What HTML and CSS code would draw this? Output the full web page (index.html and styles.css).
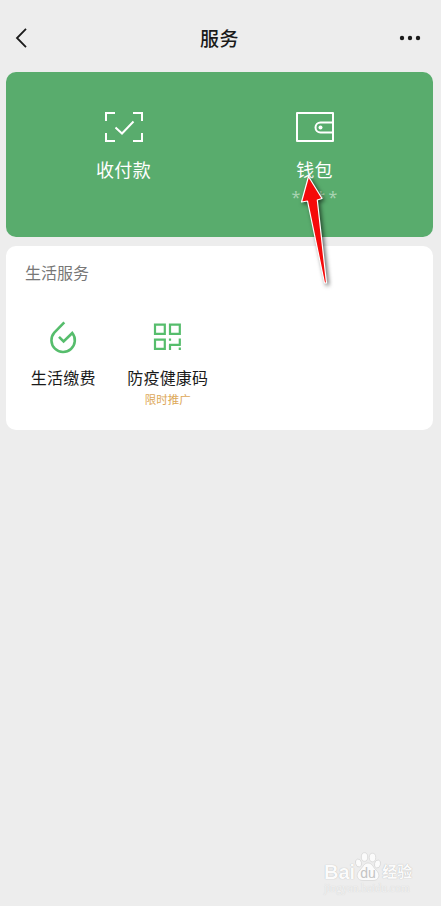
FILE: index.html
```html
<!DOCTYPE html>
<html lang="zh-CN">
<head>
    <meta charset="UTF-8">
    <meta name="viewport" content="width=device-width, initial-scale=1.0">
    <title>服务</title>
    <link rel="stylesheet" href="styles.css">
</head>
<body>
    <header class="navbar">
        <svg class="back" width="14" height="22" viewBox="0 0 14 22">
            <path d="M12 1.800 3 11l9 9.200" fill="none" stroke="#1a1a1a" stroke-width="1.800"/>
        </svg>
        <h1>服务</h1>
        <svg class="more" width="22" height="6" viewBox="0 0 22 6">
            <circle cx="3" cy="3" r="2.200"/>
            <circle cx="11" cy="3" r="2.200"/>
            <circle cx="19" cy="3" r="2.200"/>
        </svg>
    </header>

    <main>
        <section class="pay-card">
            <div class="pay-item">
                <svg width="40" height="32" viewBox="0 0 40 32" fill="none" stroke="#fff" stroke-width="2">
                    <path d="M2 10V2h9M29 2h9v8M38 22v8h-9M11 30H2v-8M11.500 16.500l6.500 6 11.500-12"/>
                </svg>
                <span class="pay-label">收付款</span>
            </div>
            <div class="pay-item">
                <svg width="40" height="32" viewBox="0 0 40 32" fill="none" stroke="#fff" stroke-width="2" stroke-linejoin="round">
                    <rect x="2" y="2" width="36" height="28"/>
                    <path d="M38 11.500H25.500a5 5 0 0 0 0 10H38"/>
                    <circle cx="25.500" cy="16.500" r="2" fill="#fff" stroke="none"/>
                </svg>
                <span class="pay-label">钱包</span>
                <span class="balance"><i>*</i><i>*</i><i>*</i><i>*</i></span>
            </div>
        </section>

        <section class="service-card">
            <h2>生活服务</h2>
            <div class="service-list">
                <div class="service-item">
                    <svg width="32" height="34" viewBox="0 0 32 34" fill="none" stroke="#56bd6c" stroke-width="2.600">
                        <path d="M17.300 2.400 7.300 12.600A11.700 11.700 0 1 0 25.300 13L16.600 21.500l-4.600-4.600"/>
                    </svg>
                    <span class="service-name">生活缴费</span>
                </div>
                <div class="service-item">
                    <svg width="32" height="34" viewBox="0 0 32 34" fill="none" stroke="#56bd6c" stroke-width="2.200">
                        <path d="M3 4.600h9.800v9.300H3zM18 4.600h9.800v9.300H18zM3 19.600h9.800v9.300H3z"/>
                        <path d="M18 18.500v2.300M27.800 18.500v6.300M17 24.800h11.800M18 24.800V30M27.800 27.500V30"/>
                    </svg>
                    <span class="service-name">防疫健康码</span>
                    <span class="service-tag">限时推广</span>
                </div>
            </div>
        </section>
    </main>

    <svg class="pointer" width="50" height="130" viewBox="0 0 50 130">
        <path d="M18.500 6.500 32 28.500l-4.700 1.500L36.500 113H34.500L17.500 31 11.500 32z"/>
    </svg>

    <div class="watermark">
        <div class="watermark-logo">
            <span class="watermark-bai">Bai</span>
            <svg width="26" height="30" viewBox="0 0 26 30">
                <g fill="#fbfbfb" stroke="#d4d4d4" stroke-width=".7">
                    <ellipse cx="3.500" cy="11" rx="3" ry="4" transform="rotate(-15 3.500 11)"/>
                    <ellipse cx="9.500" cy="5" rx="3.200" ry="4.300"/>
                    <ellipse cx="17.500" cy="5.500" rx="3.200" ry="4.300"/>
                    <ellipse cx="22.500" cy="12" rx="3" ry="4" transform="rotate(15 22.500 12)"/>
                    <path d="M13 11c-4 0-5 4-8 7-5 4.500-3 10.500 3 10.500h10c6 0 8-6 3-10.500-3-3-4-7-8-7z"/>
                </g>
                <text class="watermark-du" x="13" y="26" text-anchor="middle">du</text>
            </svg>
            <span class="watermark-cn">经验</span>
        </div>
        <div class="watermark-url">jingyan.baidu.com</div>
    </div>
</body>
</html>
```

FILE: styles.css
```css
:root {
    --bg-color: #ededed;
    --text-color: #1a1a1a;
    --green: #59ac6d;
    --tag-color: #dda858;
}

body {
    font-family: "Noto Sans CJK SC", sans-serif;
    background-color: var(--bg-color);
    color: var(--text-color);
    margin: 0;
    height: 906px;
    position: relative;
    overflow: hidden;
}
h1, h2 {
    margin: 0;
}
.navbar {
    display: flex;
    justify-content: space-between;
    align-items: center;
    height: 72px;
    padding: 4px 20px 0 14px;
    box-sizing: border-box;
}
.navbar h1 {
    font-size: 19px;
    font-weight: 500;
    letter-spacing: 0.500px;
    line-height: 24px;
    padding: 0 0 1px 12px;
}
.more {
    fill: var(--text-color);
}
main {
    display: flex;
    flex-direction: column;
    gap: 9px;
    padding: 0 8px 0 6px;
}
.pay-card {
    display: flex;
    height: 165px;
    padding: 39px 23px 0 22px;
    box-sizing: border-box;
    background: var(--green);
    border-radius: 10px;
    color: #fff;
}
.pay-item {
    flex: 1;
    display: flex;
    flex-direction: column;
    align-items: center;
}
.pay-label {
    margin-top: 13px;
    font-size: 18px;
    line-height: 26px;
    letter-spacing: 0.300px;
}
.balance {
    display: flex;
    gap: 3.500px;
    margin-top: 5px;
    font-family: "Noto Sans", sans-serif;
    font-size: 16px;
    line-height: 20px;
    color: #a8d3b2;
}
.balance i {
    font-style: normal;
}
.service-card {
    height: 184px;
    background: #fff;
    border-radius: 10px;
}
.service-card h2 {
    padding: 14px 0 0 19px;
    font-size: 16px;
    font-weight: 400;
    line-height: 24px;
    color: #777;
}
.service-list {
    display: flex;
    padding: 36px 0 0 5px;
}
.service-item {
    width: 104.500px;
    display: flex;
    flex-direction: column;
    align-items: center;
}
.service-name {
    margin-top: 11px;
    font-size: 16px;
    line-height: 24px;
    letter-spacing: 0.200px;
}
.service-tag {
    margin-top: 2px;
    font-size: 11.500px;
    line-height: 16px;
    color: var(--tag-color);
}
/* red arrow lying over the wallet entry */
.pointer {
    position: absolute;
    left: 290px;
    top: 170px;
    fill: #f50a0a;
    stroke: #fff;
    stroke-width: 1.200px;
    stroke-linejoin: round;
    filter: drop-shadow(2px 2px 2px rgba(0, 0, 0, 0.6));
}
.watermark {
    position: absolute;
    left: 324px;
    top: 852px;
    font-family: "Liberation Sans", "Noto Sans CJK SC", sans-serif;
    color: #fbfbfb;
    text-shadow: 0 0 1px #aaa;
}
.watermark-logo {
    display: flex;
    align-items: flex-end;
    height: 30px;
}
.watermark-bai {
    font-size: 20px;
    font-weight: bold;
    line-height: 20px;
}
.watermark-du {
    font-size: 14px;
    fill: #c4c4c4;
    text-shadow: none;
}
.watermark-cn {
    margin-left: 1px;
    font-size: 15px;
    font-weight: bold;
    line-height: 20px;
}
.watermark-url {
    font-family: "Liberation Serif", serif;
    font-size: 11.500px;
    line-height: 13px;
    color: #f1f1f1;
    text-shadow: 0 0 1px #ccc;
}
```
